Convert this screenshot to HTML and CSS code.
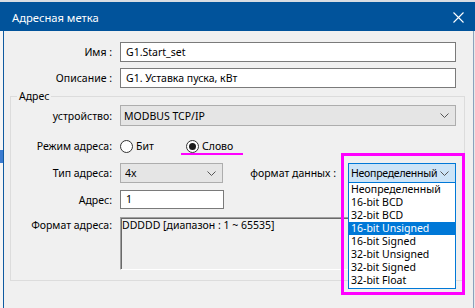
FILE: index.html
```html
<!DOCTYPE html>
<html lang="ru">
<head>
<meta charset="utf-8">
<link rel="stylesheet" href="styles.css">
</head>
<body>
<div class="screen">
  <div class="topstrip"></div>
  <div class="titlebar">
    <span class="title">Адресная метка</span>
    <svg class="close" viewBox="0 0 11 11" width="11" height="11"><path d="M0.5 0.5L10.5 10.5M10.5 0.5L0.5 10.5" stroke="#fff" stroke-width="1.1" fill="none"/></svg>
  </div>
  <div class="main">
    <div class="behind"><div class="behind-hl"></div></div>
    <div class="dialog">
      <div class="row row-out">
        <span class="lbl">Имя :</span>
        <div class="input">G1.Start_set</div>
      </div>
      <div class="row row-out row-desc">
        <span class="lbl">Описание :</span>
        <div class="input">G1. Уставка пуска, кВт</div>
      </div>
      <fieldset class="group">
        <legend class="legend">Адрес</legend>
        <div class="row row-device">
          <span class="lbl">устройство:</span>
          <div class="select select-wide">
            <span class="sel-text">MODBUS TCP/IP</span>
            <svg class="chev" viewBox="0 0 9 5" width="9" height="5"><polyline points="0.5,0.5 4.5,4.5 8.5,0.5" fill="none" stroke="#555" stroke-width="1"/></svg>
          </div>
        </div>
        <div class="row row-mode">
          <span class="lbl">Режим адреса:</span>
          <span class="radio radio-bit"><span class="dot"></span><span>Бит</span></span>
          <span class="radio radio-word"><span class="dot on"></span><span>Слово</span></span>
        </div>
        <div class="row row-type">
          <span class="lbl">Тип адреса:</span>
          <div class="select select-type">
            <span class="sel-text">4x</span>
            <svg class="chev" viewBox="0 0 9 5" width="9" height="5"><polyline points="0.5,0.5 4.5,4.5 8.5,0.5" fill="none" stroke="#555" stroke-width="1"/></svg>
          </div>
          <span class="fmt-lbl">формат данных :</span>
          <div class="fmt-wrap">
            <div class="select select-fmt">
              <span class="sel-text">Неопределенный</span>
              <svg class="chev" viewBox="0 0 9 5" width="9" height="5"><polyline points="0.5,0.5 4.5,4.5 8.5,0.5" fill="none" stroke="#555" stroke-width="1"/></svg>
            </div>
            <ul class="list">
              <li class="item">Неопределенный</li>
              <li class="item">16-bit BCD</li>
              <li class="item">32-bit BCD</li>
              <li class="item sel">16-bit Unsigned</li>
              <li class="item">16-bit Signed</li>
              <li class="item">32-bit Unsigned</li>
              <li class="item">32-bit Signed</li>
              <li class="item">32-bit Float</li>
            </ul>
            <div class="mark-box"></div>
          </div>
        </div>
        <div class="row row-addr">
          <span class="lbl">Адрес:</span>
          <div class="input input-addr">1</div>
        </div>
        <div class="row row-format">
          <span class="lbl lbl-top">Формат адреса:</span>
          <div class="fmt-box">DDDDD [диапазон : 1 ~ 65535]</div>
        </div>
      </fieldset>
    </div>
    <div class="edge"></div>
  </div>
</div>
</body>
</html>
```
FILE: styles.css
```css
* { box-sizing: border-box; }
html, body { margin: 0; padding: 0; }
body {
  width: 475px;
  height: 308px;
  overflow: hidden;
  background: #f0f0f0;
  font-family: "Noto Sans", sans-serif;
  font-size: 10.5px;
  color: #000;
}
.screen { display: flex; flex-direction: column; height: 308px; }
.topstrip { height: 2px; background: #d8dde3; }
.titlebar {
  height: 29px;
  background: #01539b;
  color: #fff;
  display: flex;
  align-items: center;
  justify-content: space-between;
  padding: 1px 11px 0 12px;
  font-size: 11.2px;
}
.close { display: block; }
.main { flex: 1; display: flex; }
.behind { width: 3px; background: #f5f5f5; display: flex; flex-direction: column; }
.behind-hl { margin-top: 119px; height: 13px; background: #3b7bd0; }
.edge { width: 1px; background: #e8e8e8; }
.dialog {
  width: 471px;
  border-left: 1px solid #0f5aa0;
  border-right: 1px solid #8aa2bd;
  background: #f0f0f0;
  padding: 11px 8px 0 6px;
  display: flex;
  flex-direction: column;
}
.row { display: flex; align-items: center; }
.row-out { padding-right: 9px; }
.row-desc { margin-top: 6px; }
.lbl {
  flex: none;
  width: 102px;
  margin-right: 8px;
  text-align: right;
  white-space: nowrap;
  line-height: 14px;
}
.input {
  flex: 1;
  height: 20px;
  border: 1px solid #7a7a7a;
  background: #fff;
  padding: 0 5px;
  line-height: 18px;
  white-space: nowrap;
}
.group {
  margin: 1px 0 0 0;
  padding: 2px 8px 10px 0;
  border: 1px solid #dcdcdc;
  min-width: 0;
}
.legend { margin-left: 6px; padding: 0 2px; line-height: 14px; }
.group .lbl { width: 101px; }
.select {
  display: flex;
  align-items: center;
  border: 1px solid #adadad;
  background: #e5e5e5;
  padding: 0 6px 0 3px;
}
.sel-text { flex: 1; min-width: 0; overflow: hidden; white-space: nowrap; line-height: 14px; }
.chev { flex: none; display: block; margin-left: 4px; }
.select-wide { flex: 1; height: 21px; }
.row-mode { margin-top: 10px; height: 20px; align-items: stretch; }
.row-mode .lbl { align-self: center; }
.radio { display: flex; align-items: center; gap: 3px; }
.radio-bit { width: 66px; }
.radio-word { position: relative; }
.radio-word::after {
  content: "";
  position: absolute;
  left: -5px;
  top: 17px;
  width: 62px;
  height: 2px;
  background: #ff00ff;
}
.dot {
  width: 13px;
  height: 13px;
  border: 1px solid #333;
  border-radius: 50%;
  background: #fff;
  display: flex;
  align-items: center;
  justify-content: center;
}
.dot.on::after {
  content: "";
  width: 7px;
  height: 7px;
  border-radius: 50%;
  background: #1a1a1a;
}
.row-type { margin-top: 7px; height: 20px; }
.select-type { width: 103px; height: 20px; padding-left: 4px; }
.fmt-lbl { margin-left: auto; margin-right: 12px; white-space: nowrap; line-height: 14px; }
.fmt-wrap { position: relative; width: 108px; height: 20px; }
.select-fmt {
  height: 20px;
  background: #cce4f7;
  border-color: #0078d7;
  padding-left: 2px;
}
.select-fmt .sel-text { letter-spacing: -0.25px; }
.select-fmt .chev { margin-left: 2px; }
.list {
  position: absolute;
  left: 0;
  top: 19px;
  width: 108px;
  margin: 0;
  padding: 0 0 1px 0;
  list-style: none;
  background: #fff;
  border: 1px solid #0078d7;
  z-index: 2;
}
.item { height: 13px; line-height: 13px; padding-left: 2px; white-space: nowrap; }
.item.sel { background: #0078d7; color: #fff; }
.mark-box {
  position: absolute;
  left: -7px;
  top: -10px;
  width: 124px;
  height: 142px;
  border: 3px solid #ff00ff;
  z-index: 3;
}
.row-addr { margin-top: 7px; }
.input-addr { flex: none; width: 104px; height: 19px; line-height: 17px; }
.row-format { margin-top: 8px; align-items: flex-start; }
.lbl-top { margin-top: 1px; }
.fmt-box {
  flex: 1;
  height: 53px;
  border-top: 1px solid #a0a0a0;
  border-left: 1px solid #a0a0a0;
  border-bottom: 1px solid #fff;
  border-right: 1px solid #fff;
  box-shadow: inset 1px 1px 0 #696969;
  padding: 0 0 0 1px;
  line-height: 14px;
  white-space: nowrap;
}
```
